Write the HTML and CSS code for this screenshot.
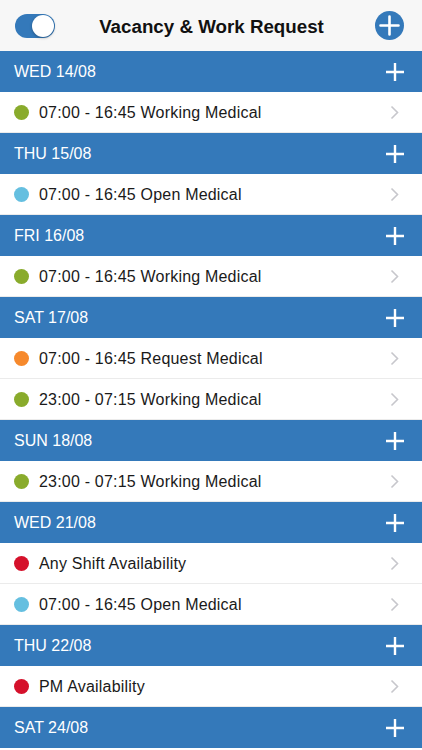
FILE: index.html
```html
<!DOCTYPE html>
<html>
<head>
<meta charset="utf-8">
<link rel="stylesheet" href="styles.css">
</head>
<body>
<div class="topbar">
  <div class="toggle"><div class="knob"></div></div>
  <div class="title">Vacancy &amp; Work Request</div>
  <svg class="addcircle" width="29" height="29" viewBox="0 0 29 29"><circle cx="14.5" cy="14.5" r="14.5" fill="#3479ba"/><path d="M14.5 5.5v18M5.5 14.5h18" stroke="#fff" stroke-width="2.6" stroke-linecap="round"/></svg>
</div>
<div class="list">
  <div class="sec"><span>WED 14/08</span><svg class="plus" width="20" height="20" viewBox="0 0 20 20"><path d="M10 1v18M1 10h18" stroke="#fff" stroke-width="2.4"/></svg></div>
  <div class="row"><span class="dot green"></span><span class="txt">07:00 - 16:45 Working Medical</span><svg class="chev" width="9" height="15" viewBox="0 0 9 15"><path d="M1.5 1.5l6 6-6 6" fill="none" stroke="#c7c7cc" stroke-width="1.6"/></svg></div>
  <div class="sec"><span>THU 15/08</span><svg class="plus" width="20" height="20" viewBox="0 0 20 20"><path d="M10 1v18M1 10h18" stroke="#fff" stroke-width="2.4"/></svg></div>
  <div class="row"><span class="dot blue"></span><span class="txt">07:00 - 16:45 Open Medical</span><svg class="chev" width="9" height="15" viewBox="0 0 9 15"><path d="M1.5 1.5l6 6-6 6" fill="none" stroke="#c7c7cc" stroke-width="1.6"/></svg></div>
  <div class="sec"><span>FRI 16/08</span><svg class="plus" width="20" height="20" viewBox="0 0 20 20"><path d="M10 1v18M1 10h18" stroke="#fff" stroke-width="2.4"/></svg></div>
  <div class="row"><span class="dot green"></span><span class="txt">07:00 - 16:45 Working Medical</span><svg class="chev" width="9" height="15" viewBox="0 0 9 15"><path d="M1.5 1.5l6 6-6 6" fill="none" stroke="#c7c7cc" stroke-width="1.6"/></svg></div>
  <div class="sec"><span>SAT 17/08</span><svg class="plus" width="20" height="20" viewBox="0 0 20 20"><path d="M10 1v18M1 10h18" stroke="#fff" stroke-width="2.4"/></svg></div>
  <div class="row"><span class="dot orange"></span><span class="txt">07:00 - 16:45 Request Medical</span><svg class="chev" width="9" height="15" viewBox="0 0 9 15"><path d="M1.5 1.5l6 6-6 6" fill="none" stroke="#c7c7cc" stroke-width="1.6"/></svg></div>
  <div class="row"><span class="dot green"></span><span class="txt">23:00 - 07:15 Working Medical</span><svg class="chev" width="9" height="15" viewBox="0 0 9 15"><path d="M1.5 1.5l6 6-6 6" fill="none" stroke="#c7c7cc" stroke-width="1.6"/></svg></div>
  <div class="sec"><span>SUN 18/08</span><svg class="plus" width="20" height="20" viewBox="0 0 20 20"><path d="M10 1v18M1 10h18" stroke="#fff" stroke-width="2.4"/></svg></div>
  <div class="row"><span class="dot green"></span><span class="txt">23:00 - 07:15 Working Medical</span><svg class="chev" width="9" height="15" viewBox="0 0 9 15"><path d="M1.5 1.5l6 6-6 6" fill="none" stroke="#c7c7cc" stroke-width="1.6"/></svg></div>
  <div class="sec"><span>WED 21/08</span><svg class="plus" width="20" height="20" viewBox="0 0 20 20"><path d="M10 1v18M1 10h18" stroke="#fff" stroke-width="2.4"/></svg></div>
  <div class="row"><span class="dot red"></span><span class="txt">Any Shift Availability</span><svg class="chev" width="9" height="15" viewBox="0 0 9 15"><path d="M1.5 1.5l6 6-6 6" fill="none" stroke="#c7c7cc" stroke-width="1.6"/></svg></div>
  <div class="row"><span class="dot blue"></span><span class="txt">07:00 - 16:45 Open Medical</span><svg class="chev" width="9" height="15" viewBox="0 0 9 15"><path d="M1.5 1.5l6 6-6 6" fill="none" stroke="#c7c7cc" stroke-width="1.6"/></svg></div>
  <div class="sec"><span>THU 22/08</span><svg class="plus" width="20" height="20" viewBox="0 0 20 20"><path d="M10 1v18M1 10h18" stroke="#fff" stroke-width="2.4"/></svg></div>
  <div class="row"><span class="dot red"></span><span class="txt">PM Availability</span><svg class="chev" width="9" height="15" viewBox="0 0 9 15"><path d="M1.5 1.5l6 6-6 6" fill="none" stroke="#c7c7cc" stroke-width="1.6"/></svg></div>
  <div class="sec"><span>SAT 24/08</span><svg class="plus" width="20" height="20" viewBox="0 0 20 20"><path d="M10 1v18M1 10h18" stroke="#fff" stroke-width="2.4"/></svg></div>
</div>
</body>
</html>
```
FILE: styles.css
```css
html, body {
  margin: 0;
  padding: 0;
  background: #fff;
  font-family: "Liberation Sans", Arial, sans-serif;
  overflow: hidden;
}
.topbar {
  height: 51px;
  background: #f7f7f7;
  display: flex;
  align-items: center;
  padding: 0 18px 0 15px;
  box-sizing: border-box;
}
.toggle {
  width: 40px;
  height: 24px;
  border-radius: 12px;
  background: #3479ba;
  position: relative;
  flex: none;
}
.knob {
  position: absolute;
  right: 1px;
  top: 1px;
  width: 22px;
  height: 22px;
  border-radius: 50%;
  background: #fff;
  box-shadow: 0 1px 3px rgba(0,0,0,0.3);
}
.title {
  flex: 1;
  text-align: center;
  font-weight: bold;
  font-size: 18.75px;
  color: #111;
  padding-right: 7px;
  padding-top: 2px;
}
.addcircle { flex: none; display: block; }
.sec {
  height: 41px;
  background: #3479ba;
  color: #fff;
  display: flex;
  align-items: center;
  justify-content: space-between;
  padding: 0 17px 0 14px;
  font-size: 16px;
  box-sizing: border-box;
}
.plus { display: block; }
.row {
  height: 41px;
  display: flex;
  align-items: center;
  padding: 1px 23px 0 14px;
  box-sizing: border-box;
  border-bottom: 1px solid #ebebeb;
  font-size: 16px;
  letter-spacing: 0.2px;
  color: #1a1a1a;
}
.dot {
  width: 15px;
  height: 15px;
  border-radius: 50%;
  flex: none;
  margin-right: 10px;
}
.txt { flex: 1; }
.chev { flex: none; display: block; }
.green { background: #89ab2c; }
.blue { background: #65bfe0; }
.orange { background: #f6892c; }
.red { background: #d5112b; }
```
